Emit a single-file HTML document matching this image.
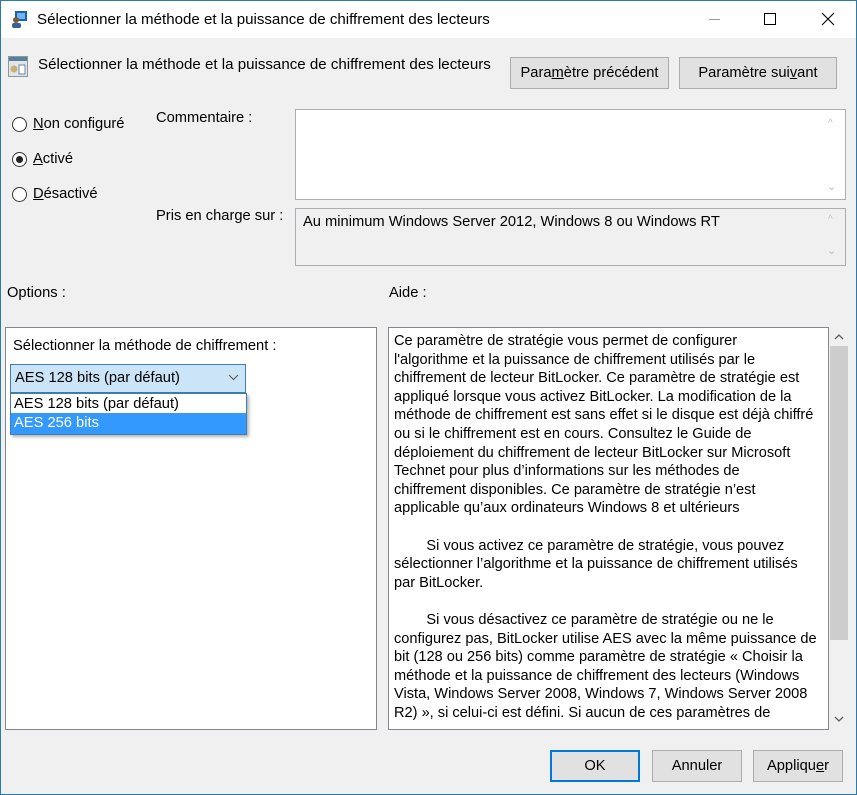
<!DOCTYPE html>
<html><head><meta charset="utf-8"><style>
*{margin:0;padding:0;box-sizing:border-box}
body{width:857px;height:795px;overflow:hidden;background:#f0f0f0;font-family:"Liberation Sans",sans-serif;font-size:14.7px;color:#000;position:relative}
.a{position:absolute;white-space:nowrap}
.win{position:absolute;left:0;top:0;width:857px;height:795px;border:1px solid #2b7aa8}
.btn{position:absolute;background:#e1e1e1;border:1px solid #adadad;text-align:center;font-size:14.7px}
.box{position:absolute;background:#fff;border:1px solid #abadb3}
.rad{position:absolute;width:15px;height:15px;border:1px solid #333;border-radius:50%;background:#fff}
.help div{height:18.6px;line-height:18.6px;white-space:nowrap;font-size:14.6px}
u{text-decoration:underline}
</style></head><body>
<div class="win"></div>
<div class="a" style="left:1px;top:1px;width:855px;height:37px;background:#fff"></div>
<svg class="a" style="left:11px;top:10px" width="18" height="18"><rect x="4" y="1" width="12" height="10" fill="#1d5fb5"/><rect x="6" y="3" width="8" height="6" fill="#6fb6f0"/><circle cx="5" cy="10" r="3" fill="#7a5a3a"/><rect x="1" y="13" width="9" height="5" rx="2" fill="#3d5f8f"/></svg>
<div class="a" style="left:37px;top:11px;font-size:15.1px">Sélectionner la méthode et la puissance de chiffrement des lecteurs</div>
<div class="a" style="left:709px;top:19px;width:11px;height:1px;background:#999"></div>
<div class="a" style="left:764px;top:13px;width:12px;height:12px;border:1px solid #000"></div>
<svg class="a" style="left:821px;top:12px" width="14" height="14"><path d="M1 1L13 13M13 1L1 13" stroke="#000" stroke-width="1.1"/></svg>

<svg class="a" style="left:8px;top:56px" width="20" height="21"><rect x="0.5" y="0.5" width="19" height="20" fill="#dfe6ea" stroke="#8a9aa0"/><rect x="1" y="1" width="18" height="4" fill="#5b7f95"/><circle cx="6" cy="13" r="3.5" fill="#c9b070"/><rect x="11" y="9" width="6" height="9" fill="#fff" stroke="#6a8a9a"/></svg>
<div class="a" style="left:38px;top:56px;font-size:15.1px">Sélectionner la méthode et la puissance de chiffrement des lecteurs</div>
<div class="btn" style="left:510px;top:57px;width:159px;height:32px;line-height:31px">Para<u>m</u>ètre précédent</div>
<div class="btn" style="left:679px;top:57px;width:158px;height:32px;line-height:31px">Paramètre sui<u>v</u>ant</div>

<div class="rad" style="left:12px;top:117px"></div><div class="a" style="left:33px;top:116px"><u>N</u>on configuré</div>
<div class="rad" style="left:12px;top:152px"><div style="position:absolute;left:3px;top:3px;width:7px;height:7px;border-radius:50%;background:#222"></div></div><div class="a" style="left:33px;top:151px"><u>A</u>ctivé</div>
<div class="rad" style="left:12px;top:187px"></div><div class="a" style="left:33px;top:186px"><u>D</u>ésactivé</div>

<div class="a" style="left:156px;top:110px">Commentaire :</div>
<div class="box" style="left:295px;top:109px;width:551px;height:91px"></div>
<div class="a" style="left:828px;top:118px;font-size:10px;color:#bbb">&#94;</div>
<div class="a" style="left:827px;top:180px;font-size:11px;color:#bbb">&#8964;</div>
<div class="a" style="left:156px;top:208px">Pris en charge sur :</div>
<div class="a" style="left:295px;top:208px;width:551px;height:58px;border:1px solid #abadb3;background:#f0f0f0"></div>
<div class="a" style="left:303px;top:214px">Au minimum Windows Server 2012, Windows 8 ou Windows RT</div>
<div class="a" style="left:828px;top:214px;font-size:10px;color:#bbb">&#94;</div>
<div class="a" style="left:827px;top:244px;font-size:11px;color:#bbb">&#8964;</div>

<div class="a" style="left:7px;top:285px">Options :</div>
<div class="a" style="left:389px;top:285px">Aide :</div>

<div class="box" style="left:5px;top:327px;width:372px;height:403px;border-color:#828790"></div>
<div class="a" style="left:13px;top:338px">Sélectionner la méthode de chiffrement :</div>
<div class="a" style="left:10px;top:364px;width:236px;height:29px;background:#cce4f7;border:1px solid #3c7fb1"></div>
<div class="a" style="left:15px;top:370px">AES 128 bits (par défaut)</div>
<svg class="a" style="left:228px;top:374px" width="11" height="7"><path d="M1 1L5.5 5.5L10 1" stroke="#555" fill="none"/></svg>
<div class="a" style="left:10px;top:393px;width:237px;height:42px;background:#fff;border:1px solid #3c7fb1;box-shadow:2px 2px 3px rgba(0,0,0,.3)"></div>
<div class="a" style="left:11px;top:413px;width:235px;height:21px;background:#3399ff"></div>
<div class="a" style="left:14px;top:396px">AES 128 bits (par défaut)</div>
<div class="a" style="left:14px;top:415px;color:#fff">AES 256 bits</div>

<div class="box help" style="left:388px;top:327px;width:441px;height:403px;border-color:#828790;padding:4px 0 0 5px;overflow:hidden">
<div>Ce paramètre de stratégie vous permet de configurer</div>
<div>l'algorithme et la puissance de chiffrement utilisés par le</div>
<div>chiffrement de lecteur BitLocker. Ce paramètre de stratégie est</div>
<div>appliqué lorsque vous activez BitLocker. La modification de la</div>
<div>méthode de chiffrement est sans effet si le disque est déjà chiffré</div>
<div>ou si le chiffrement est en cours. Consultez le Guide de</div>
<div>déploiement du chiffrement de lecteur BitLocker sur Microsoft</div>
<div>Technet pour plus d’informations sur les méthodes de</div>
<div>chiffrement disponibles. Ce paramètre de stratégie n’est</div>
<div>applicable qu’aux ordinateurs Windows 8 et ultérieurs</div>
<div>&nbsp;</div>
<div>&nbsp;&nbsp;&nbsp;&nbsp;&nbsp;&nbsp;&nbsp;&nbsp;Si vous activez ce paramètre de stratégie, vous pouvez</div>
<div>sélectionner l’algorithme et la puissance de chiffrement utilisés</div>
<div>par BitLocker.</div>
<div>&nbsp;</div>
<div>&nbsp;&nbsp;&nbsp;&nbsp;&nbsp;&nbsp;&nbsp;&nbsp;Si vous désactivez ce paramètre de stratégie ou ne le</div>
<div>configurez pas, BitLocker utilise AES avec la même puissance de</div>
<div>bit (128 ou 256 bits) comme paramètre de stratégie « Choisir la</div>
<div>méthode et la puissance de chiffrement des lecteurs (Windows</div>
<div>Vista, Windows Server 2008, Windows 7, Windows Server 2008</div>
<div>R2) », si celui-ci est défini. Si aucun de ces paramètres de</div>
</div>
<div class="a" style="left:829px;top:327px;width:20px;height:403px;background:#f0f0f0"></div>
<svg class="a" style="left:834px;top:334px" width="10" height="6"><path d="M1 5L5 1L9 5" stroke="#606060" fill="none" stroke-width="1.3"/></svg>
<div class="a" style="left:830px;top:346px;width:18px;height:294px;background:#cdcdcd"></div>
<svg class="a" style="left:834px;top:716px" width="10" height="6"><path d="M1 1L5 5L9 1" stroke="#606060" fill="none" stroke-width="1.3"/></svg>

<div class="btn" style="left:550px;top:750px;width:90px;height:32px;line-height:29px;border:2px solid #0078d7">OK</div>
<div class="btn" style="left:652px;top:750px;width:90px;height:32px;line-height:31px">Annuler</div>
<div class="btn" style="left:753px;top:750px;width:90px;height:32px;line-height:31px">Appliqu<u>e</u>r</div>
</body></html>
